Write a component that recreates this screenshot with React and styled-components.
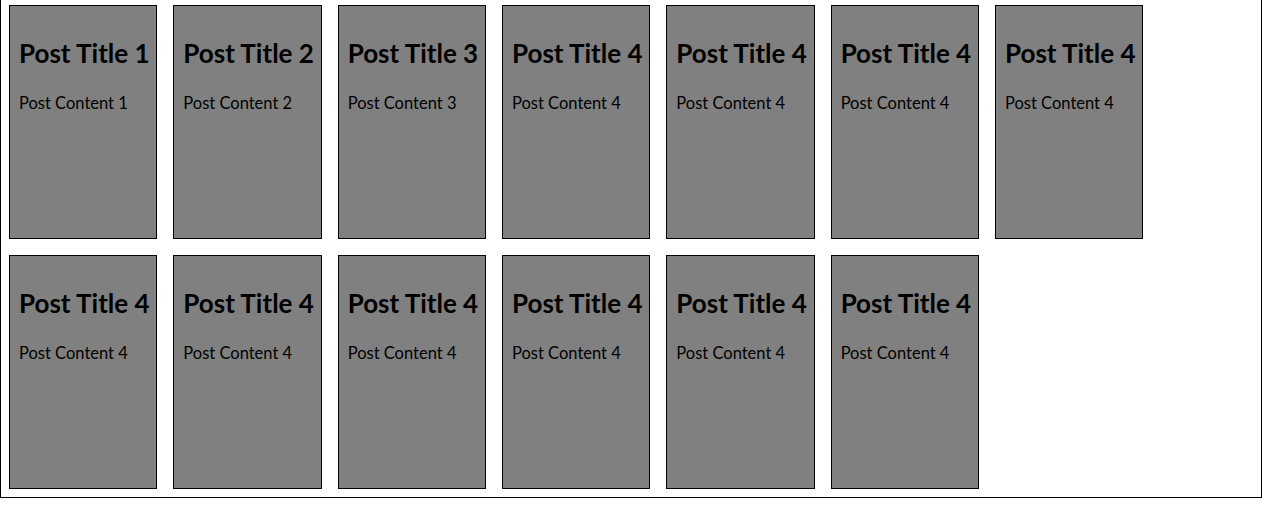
import React from 'react';
import styled, { createGlobalStyle } from 'styled-components';

const GlobalStyle = createGlobalStyle`
  html, body {
    margin: 0;
    padding: 0;
    background: #fff;
    overflow: hidden;
  }
  body {
    font-family: Lato, "Liberation Sans", sans-serif;
  }
`;

const Board = styled.div`
  box-sizing: border-box;
  width: 1262px;
  margin-top: -4px;
  border: 1px solid #000;
  padding: 8px 0 8px 8px;
  display: flex;
  flex-wrap: wrap;
  gap: 16px;
`;

const Card = styled.article`
  box-sizing: border-box;
  width: 148.33px;
  height: 234px;
  background: gray;
  border: 1px solid #000;
  padding: 0 9px;
  color: #000;
`;

const Title = styled.h2`
  margin: 32px 0 0;
  font-size: 26px;
  font-weight: 700;
  line-height: 30px;
  white-space: nowrap;
`;

const Body = styled.p`
  margin: 25px 0 0;
  font-size: 16.5px;
  line-height: 20px;
  white-space: nowrap;
`;

const posts = [
  { title: 'Post Title 1', content: 'Post Content 1' },
  { title: 'Post Title 2', content: 'Post Content 2' },
  { title: 'Post Title 3', content: 'Post Content 3' },
  ...Array.from({ length: 10 }, () => ({
    title: 'Post Title 4',
    content: 'Post Content 4',
  })),
];

const App = () => (
  <>
    <GlobalStyle />
    <Board>
      {posts.map((post, i) => (
        <Card key={i}>
          <Title>{post.title}</Title>
          <Body>{post.content}</Body>
        </Card>
      ))}
    </Board>
  </>
);

export default App;
